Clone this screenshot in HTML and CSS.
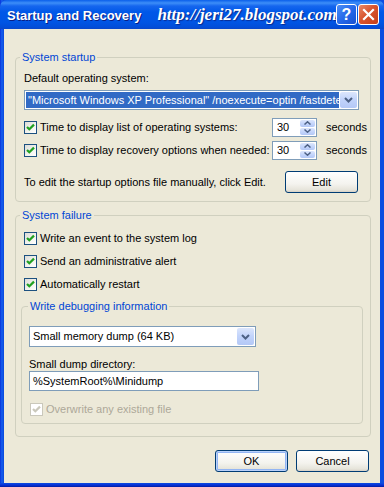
FILE: index.html
```html
<!DOCTYPE html>
<html lang="en">
<head>
    <meta charset="UTF-8">
    <title>Startup and Recovery</title>
    <link rel="stylesheet" href="styles.css">
</head>
<body>
    <div class="window">
        <div class="titlebar">
            <span class="title">Startup and Recovery</span>
            <span class="watermark">http://jeri27.blogspot.com</span>
            <div class="title-buttons">
                <span class="tbtn tbtn-help">?</span>
                <span class="tbtn tbtn-close">
                    <svg width="13" height="13" viewBox="0 0 13 13">
                        <path d="M2 2L11 11M11 2L2 11" stroke="#fff" stroke-width="2.2" stroke-linecap="square"/>
                    </svg>
                </span>
            </div>
        </div>

        <div class="client">
            <!-- System startup -->
            <fieldset class="group">
                <legend>System startup</legend>
                <div class="label">Default operating system:</div>
                <div class="combo combo-os">
                    <span class="combo-text selected">"Microsoft Windows XP Professional" /noexecute=optin /fastdetect</span>
                    <span class="drop-btn">
                        <svg width="9" height="6" viewBox="0 0 9 6"><path d="M1 1L4.5 4.5L8 1" fill="none" stroke="#4d6185" stroke-width="2"/></svg>
                    </span>
                </div>

                <div class="time-row">
                    <label class="check-label"><span class="check"><svg width="11" height="11" viewBox="0 0 11 11"><path d="M2 5L4.3 7.3L9 2.6" fill="none" stroke="#21a121" stroke-width="2.2"/></svg></span>Time to display list of operating systems:</label>
                    <div class="spinner">
                        <span class="spin-value">30</span>
                        <span class="spin-btns">
                            <span class="spin-btn"><svg width="7" height="4" viewBox="0 0 7 4"><path d="M0.5 3.5L3.5 0.8L6.5 3.5" fill="none" stroke="#4d6185" stroke-width="1.5"/></svg></span>
                            <span class="spin-btn"><svg width="7" height="4" viewBox="0 0 7 4"><path d="M0.5 0.5L3.5 3.2L6.5 0.5" fill="none" stroke="#4d6185" stroke-width="1.5"/></svg></span>
                        </span>
                    </div>
                    <span>seconds</span>
                </div>

                <div class="time-row">
                    <label class="check-label"><span class="check"><svg width="11" height="11" viewBox="0 0 11 11"><path d="M2 5L4.3 7.3L9 2.6" fill="none" stroke="#21a121" stroke-width="2.2"/></svg></span>Time to display recovery options when needed:</label>
                    <div class="spinner">
                        <span class="spin-value">30</span>
                        <span class="spin-btns">
                            <span class="spin-btn"><svg width="7" height="4" viewBox="0 0 7 4"><path d="M0.5 3.5L3.5 0.8L6.5 3.5" fill="none" stroke="#4d6185" stroke-width="1.5"/></svg></span>
                            <span class="spin-btn"><svg width="7" height="4" viewBox="0 0 7 4"><path d="M0.5 0.5L3.5 3.2L6.5 0.5" fill="none" stroke="#4d6185" stroke-width="1.5"/></svg></span>
                        </span>
                    </div>
                    <span>seconds</span>
                </div>

                <div class="edit-row">
                    <span>To edit the startup options file manually, click Edit.</span>
                    <span class="xp-btn">Edit</span>
                </div>
            </fieldset>

            <!-- System failure -->
            <fieldset class="group group-failure">
                <legend>System failure</legend>
                <div class="check-list">
                    <label class="check-label"><span class="check"><svg width="11" height="11" viewBox="0 0 11 11"><path d="M2 5L4.3 7.3L9 2.6" fill="none" stroke="#21a121" stroke-width="2.2"/></svg></span>Write an event to the system log</label>
                    <label class="check-label"><span class="check"><svg width="11" height="11" viewBox="0 0 11 11"><path d="M2 5L4.3 7.3L9 2.6" fill="none" stroke="#21a121" stroke-width="2.2"/></svg></span>Send an administrative alert</label>
                    <label class="check-label"><span class="check"><svg width="11" height="11" viewBox="0 0 11 11"><path d="M2 5L4.3 7.3L9 2.6" fill="none" stroke="#21a121" stroke-width="2.2"/></svg></span>Automatically restart</label>
                </div>

                <fieldset class="group group-debug">
                    <legend>Write debugging information</legend>
                    <div class="combo combo-dump">
                        <span class="combo-text">Small memory dump (64 KB)</span>
                        <span class="drop-btn">
                            <svg width="9" height="6" viewBox="0 0 9 6"><path d="M1 1L4.5 4.5L8 1" fill="none" stroke="#4d6185" stroke-width="2"/></svg>
                        </span>
                    </div>
                    <div class="label label-dir">Small dump directory:</div>
                    <div class="textbox">%SystemRoot%\Minidump</div>
                    <label class="check-label disabled"><span class="check"><svg width="11" height="11" viewBox="0 0 11 11"><path d="M2 5L4.3 7.3L9 2.6" fill="none" stroke="#cac8bb" stroke-width="2.2"/></svg></span>Overwrite any existing file</label>
                </fieldset>
            </fieldset>

            <div class="dialog-buttons">
                <span class="xp-btn xp-btn-default">OK</span>
                <span class="xp-btn">Cancel</span>
            </div>
        </div>
    </div>
</body>
</html>
```
FILE: styles.css
```css
* {
    box-sizing: border-box;
}
body {
    margin: 0;
    font-family: 'Liberation Sans', Arial, sans-serif;
    font-size: 11px;
    color: #000;
    background: #0a3ed1;
}
.window {
    width: 384px;
    height: 487px;
    display: flex;
    flex-direction: column;
    background: linear-gradient(90deg, #0831d9, #1662f0 2px, #0b4de0 3px);
    padding: 0 4px 4px 4px;
    position: relative;
}
.window::after {
    content: '';
    position: absolute;
    left: 0;
    right: 0;
    bottom: 0;
    height: 4px;
    background: linear-gradient(180deg, #0b4de0, #0831d9 2px, #001ea0);
}
.titlebar {
    height: 29px;
    margin: 0 -4px;
    padding: 0 5px 0 7px;
    display: flex;
    align-items: center;
    background: linear-gradient(180deg, #0a5fea 0, #3d8ef8 3px, #1566ee 6px, #0058e8 12px, #0055e4 22px, #024ed9 27px, #0a47c8 29px);
    border-radius: 7px 7px 0 0;
    color: #fff;
    position: relative;
}
.title {
    font-weight: bold;
    font-size: 13px;
    text-shadow: 1px 1px 0 #0a1e84;
    padding-top: 1px;
}
.watermark {
    font-family: 'Liberation Serif', 'Times New Roman', serif;
    font-style: italic;
    font-weight: bold;
    font-size: 17px;
    margin-left: 16px;
    white-space: nowrap;
    text-shadow: 1px 1px 1px #0a2a90;
}
.title-buttons {
    position: absolute;
    right: 5px;
    top: 4px;
    display: flex;
    gap: 1px;
}
.tbtn {
    width: 21px;
    height: 21px;
    border: 1px solid #fff;
    border-radius: 3px;
    display: flex;
    align-items: center;
    justify-content: center;
    color: #fff;
    font-weight: bold;
    font-size: 16px;
}
.tbtn-help {
    background: linear-gradient(135deg, #4d8ef7, #2366e8 55%, #1a50d0);
}
.tbtn-close {
    background: linear-gradient(135deg, #e98a6a, #d8542e 45%, #c43e18);
}
.client {
    flex: 1;
    background: #ece9d8;
    padding: 22px 9px 0 11px;
    display: flex;
    flex-direction: column;
}
.group {
    margin: 0;
    border: 1px solid #d0d0bf;
    border-radius: 4px;
    padding: 7px 11px 8px 8px;
    min-width: 0;
}
.group legend {
    color: #0046d5;
    padding: 0 2px;
    margin-left: -4px;
    line-height: 13px;
}
.label {
    line-height: 14px;
    margin-bottom: 5px;
}
.combo {
    height: 20px;
    border: 1px solid #7f9db9;
    background: #fff;
    display: flex;
    align-items: stretch;
    padding: 1px;
}
.combo-text {
    flex: 1;
    overflow: hidden;
    white-space: nowrap;
    line-height: 16px;
    padding-left: 2px;
}
.combo-text.selected {
    background: #316ac5;
    color: #fff;
}
.drop-btn {
    width: 17px;
    margin-left: 1px;
    border-radius: 2px;
    background: linear-gradient(180deg, #dce6fc, #c1d3fb 50%, #b4c8f6);
    display: flex;
    align-items: center;
    justify-content: center;
}
.time-row {
    display: grid;
    grid-template-columns: 239px 45px auto;
    column-gap: 9px;
    align-items: center;
    height: 20px;
    margin-top: 7px;
}
.time-row + .time-row {
    margin-top: 3px;
}
.check-label {
    display: flex;
    align-items: center;
    gap: 3px;
    white-space: nowrap;
    line-height: 14px;
}
.check {
    width: 13px;
    height: 13px;
    flex: none;
    border: 1px solid #1c5180;
    background: linear-gradient(135deg, #dcdcd7, #f4f4f0 60%, #fff);
    display: flex;
    align-items: center;
    justify-content: center;
}
.check-label.disabled {
    color: #aca899;
    margin-left: 1px;
}
.disabled .check {
    border-color: #cac8bb;
    background: #fff;
}
.spinner {
    height: 19px;
    border: 1px solid #7f9db9;
    background: #fff;
    display: flex;
    padding: 1px;
}
.spin-value {
    flex: 1;
    line-height: 15px;
    padding-left: 3px;
}
.spin-btns {
    width: 15px;
    display: flex;
    flex-direction: column;
    gap: 1px;
}
.spin-btn {
    flex: 1;
    border-radius: 2px;
    background: linear-gradient(180deg, #dce6fc, #c1d3fb 60%, #b4c8f6);
    display: flex;
    align-items: center;
    justify-content: center;
}
.edit-row {
    display: flex;
    justify-content: space-between;
    align-items: center;
    margin-top: 11px;
    padding-right: 1px;
    white-space: nowrap;
}
.xp-btn {
    width: 73px;
    height: 22px;
    border: 1px solid #003c74;
    border-radius: 3px;
    background: linear-gradient(180deg, #ffffff, #f4f3ee 60%, #e6e4da 90%, #d6d0c5);
    display: flex;
    align-items: center;
    justify-content: center;
}
.xp-btn-default {
    box-shadow: inset 0 0 0 1px #b9d1fa, inset 0 0 0 2px #93b5f3;
}
.group-failure {
    margin-top: 7px;
    padding: 8px 7px 12px 8px;
}
.check-list {
    display: flex;
    flex-direction: column;
    gap: 7px;
}
.check-list .check-label {
    height: 16px;
}
.group-debug {
    margin: 8px 0 0 -3px;
    padding: 13px 7px 6px 7px;
}
.group-debug legend {
    margin-left: -1px;
}
.combo-dump {
    width: 227px;
    height: 21px;
}
.label-dir {
    margin: 10px 0 0;
}
.textbox {
    width: 230px;
    height: 20px;
    border: 1px solid #7f9db9;
    background: #fff;
    line-height: 18px;
    padding-left: 3px;
}
.group-debug .check-label {
    margin-top: 10px;
    height: 16px;
}
.dialog-buttons {
    display: flex;
    justify-content: flex-end;
    gap: 8px;
    margin-top: 13px;
    padding-right: 2px;
}
```
